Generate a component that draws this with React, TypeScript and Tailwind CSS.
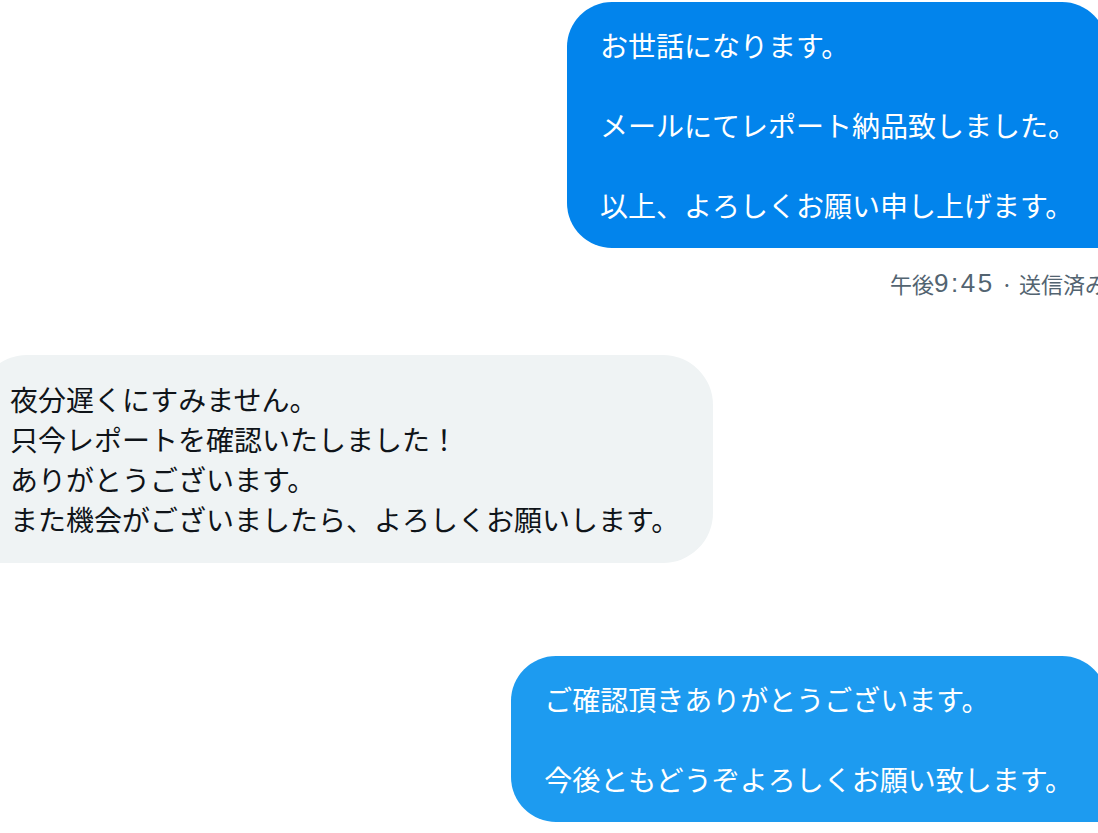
const jp = "font-['Noto_Sans_CJK_JP',sans-serif]";

interface BubbleProps {
  lines: string[];
  mine?: boolean;
  tone?: "dark" | "light";
}

function Bubble({ lines, mine, tone = "dark" }: BubbleProps) {
  const color = !mine
    ? "bg-[#eff3f4] text-[#0f1419] self-start rounded-[50px] rounded-bl-none py-[24px] pr-[34px]"
    : tone === "dark"
      ? "bg-[#0284ec] text-white self-end rounded-[45px] rounded-br-none py-[23px] pr-[31px]"
      : "bg-[#1d9bf0] text-white self-end rounded-[45px] rounded-br-none py-[23px] pr-[34px]";
  return (
    <div className={`${color} pl-[33px] text-[28px] leading-[40px] ${jp}`}>
      {lines.map((l, i) => (
        <p key={i} className="whitespace-nowrap h-[40px]">
          {l}
        </p>
      ))}
    </div>
  );
}

export default function App() {
  return (
    <div className="w-full h-[833px] overflow-hidden bg-white">
      <div className="w-[1130px] -ml-[23px] pt-[2px] flex flex-col">
        {/* sent */}
        <Bubble
          mine
          lines={[
            "お世話になります。",
            "",
            "メールにてレポート納品致しました。",
            "",
            "以上、よろしくお願い申し上げます。",
          ]}
        />
        <p className={`self-end mt-[21px] h-[28px] flex items-center text-[22px] leading-[28px] text-[#536471] ${jp} whitespace-nowrap`}>
          午後<span className="font-['Liberation_Sans',sans-serif] text-[26px] tracking-[2.5px]">9:45</span>
          <span className="px-[6px]">·</span>送信済み
        </p>

        {/* received */}
        <div className="mt-[58px] flex flex-col">
          <Bubble
            lines={[
              "夜分遅くにすみません。",
              "只今レポートを確認いたしました！",
              "ありがとうございます。",
              "また機会がございましたら、よろしくお願いします。",
            ]}
          />
        </div>

        {/* sent */}
        <div className="mt-[93px] flex flex-col">
          <Bubble
            mine
            tone="light"
            lines={["ご確認頂きありがとうございます。", "", "今後ともどうぞよろしくお願い致します。"]}
          />
        </div>
      </div>
    </div>
  );
}
